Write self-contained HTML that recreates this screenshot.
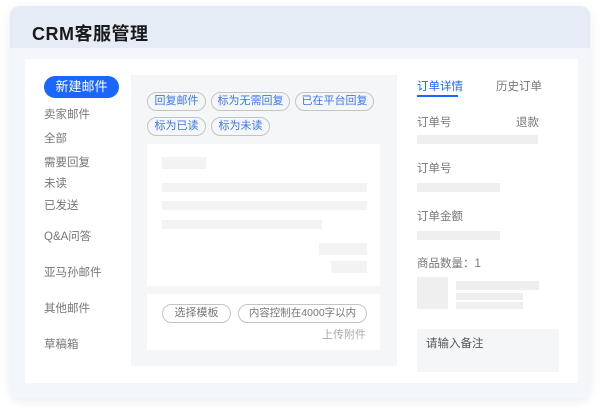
<!DOCTYPE html>
<html><head><meta charset="utf-8"><style>
*{margin:0;padding:0;box-sizing:border-box}
body{width:600px;height:412px;background:#fff;font-family:"Liberation Sans","Noto Sans CJK SC",sans-serif;position:relative;overflow:hidden}
.a{position:absolute}
.card{left:10px;top:6px;width:580px;height:392px;background:#f3f6fa;border-radius:10px;box-shadow:0 3px 10px rgba(80,100,140,.12);overflow:hidden}
.hd{left:0;top:0;width:580px;height:42px;background:#e6ecf5}
.t{font-size:11.5px;color:#777;white-space:nowrap;line-height:14px}
.b{background:#efefef}
.tag{position:absolute;height:19px;border:1px solid #c4c4c4;border-radius:10px;font-size:11px;color:#3a76f0;line-height:17px;text-align:center}
.tag.g{color:#777}
</style></head><body>
<div class="a card">
<div class="a hd"></div>
<div class="a" style="left:22px;top:14px;font-size:18px;font-weight:bold;color:#1a1a1a;letter-spacing:.5px">CRM客服管理</div>
</div>
<div class="a" style="left:25px;top:59px;width:553px;height:324px;background:#fff"></div>
<div class="a" style="left:44px;top:76px;width:75px;height:22px;background:#1a66ff;border-radius:11px;color:#fff;font-size:13px;line-height:22px;text-align:center">新建邮件</div>
<div class="a t" style="left:44px;top:108px">卖家邮件</div>
<div class="a t" style="left:44px;top:132px">全部</div>
<div class="a t" style="left:44px;top:156px">需要回复</div>
<div class="a t" style="left:44px;top:177px">未读</div>
<div class="a t" style="left:44px;top:199px">已发送</div>
<div class="a t" style="left:44px;top:230px">Q&amp;A问答</div>
<div class="a t" style="left:44px;top:266px">亚马孙邮件</div>
<div class="a t" style="left:44px;top:302px">其他邮件</div>
<div class="a t" style="left:44px;top:338px">草稿箱</div>

<div class="a" style="left:131px;top:75px;width:266px;height:291px;background:#f5f6f8"></div>
<div class="tag" style="left:147px;top:92px;width:59px">回复邮件</div>
<div class="tag" style="left:211px;top:92px;width:79px">标为无需回复</div>
<div class="tag" style="left:295px;top:92px;width:79px">已在平台回复</div>
<div class="tag" style="left:147px;top:117px;width:59px">标为已读</div>
<div class="tag" style="left:211px;top:117px;width:59px">标为未读</div>
<div class="a" style="left:147px;top:144px;width:233px;height:142px;background:#fff"></div>
<div class="a" style="left:162px;top:157px;width:44px;height:12px;background:#f3f3f3"></div>
<div class="a" style="left:162px;top:183px;width:205px;height:9px;background:#f3f3f3"></div>
<div class="a" style="left:162px;top:201px;width:205px;height:9px;background:#f3f3f3"></div>
<div class="a" style="left:162px;top:220px;width:160px;height:9px;background:#f3f3f3"></div>
<div class="a" style="left:319px;top:243px;width:48px;height:12px;background:#f3f3f3"></div>
<div class="a" style="left:331px;top:261px;width:36px;height:12px;background:#f3f3f3"></div>
<div class="a" style="left:147px;top:294px;width:233px;height:56px;background:#fff"></div>
<div class="tag g" style="left:162px;top:304px;width:69px">选择模板</div>
<div class="tag g" style="left:238px;top:304px;width:129px;font-size:10.5px">内容控制在4000字以内</div>
<div class="a t" style="left:322px;top:328px;font-size:11px;color:#aaa">上传附件</div>

<div class="a t" style="left:417px;top:80px;color:#1a66ff">订单详情</div>
<div class="a" style="left:417px;top:95px;width:41px;height:2px;background:#1a66ff"></div>
<div class="a t" style="left:496px;top:80px">历史订单</div>
<div class="a t" style="left:417px;top:116px">订单号</div>
<div class="a t" style="left:516px;top:116px">退款</div>
<div class="a b" style="left:417px;top:135px;width:121px;height:9px"></div>
<div class="a t" style="left:417px;top:162px">订单号</div>
<div class="a b" style="left:417px;top:183px;width:83px;height:9px"></div>
<div class="a t" style="left:417px;top:210px">订单金额</div>
<div class="a b" style="left:417px;top:231px;width:83px;height:9px"></div>
<div class="a t" style="left:417px;top:257px">商品数量：1</div>
<div class="a b" style="left:417px;top:277px;width:31px;height:32px"></div>
<div class="a b" style="left:456px;top:281px;width:83px;height:9px"></div>
<div class="a b" style="left:456px;top:293px;width:67px;height:7px"></div>
<div class="a b" style="left:456px;top:302px;width:67px;height:7px"></div>
<div class="a" style="left:417px;top:329px;width:142px;height:43px;background:#f5f6f8"></div>
<div class="a t" style="left:426px;top:337px;color:#555">请输入备注</div>
</body></html>
